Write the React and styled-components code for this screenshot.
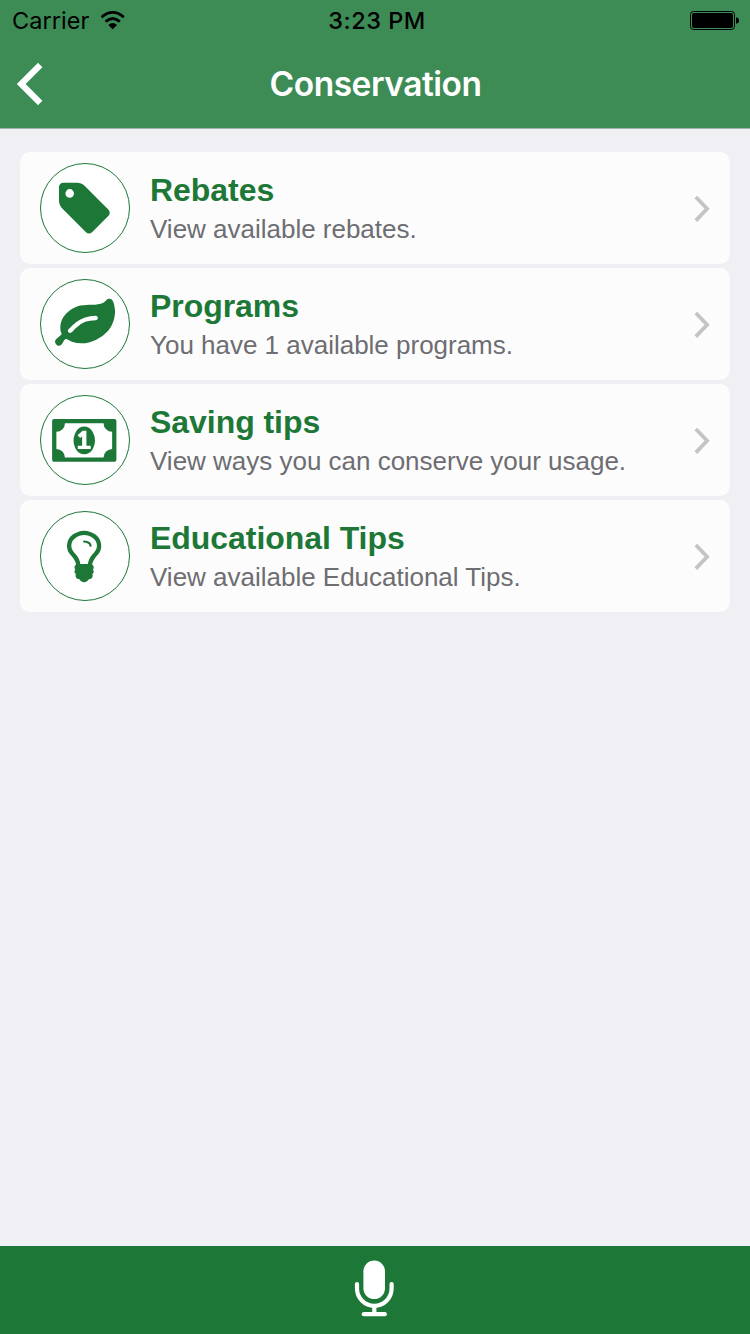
import styled, { createGlobalStyle } from "styled-components";

const GlobalStyle = createGlobalStyle`
  * {
    box-sizing: border-box;
  }
  body {
    margin: 0;
    background: #efeff4;
    font-family: "Liberation Sans", Arial, sans-serif;
  }
`;

const Screen = styled.div`
  display: flex;
  flex-direction: column;
  width: 750px;
  height: 1334px;
  overflow: hidden;
  background: #efeff4;
`;

const Header = styled.header`
  flex: none;
  height: 129px;
  background: #3d8b55;
  border-bottom: 1px solid #a3b3ab;
  font-family: Inter, sans-serif;
`;

const StatusBar = styled.div`
  display: grid;
  grid-template-columns: 1fr auto 1fr;
  align-items: center;
  height: 40px;
  padding: 0 11px 0 12px;
  color: #000;
  font-size: 24px;
  line-height: 40px;
`;

const Carrier = styled.div`
  display: flex;
  align-items: center;
  gap: 11px;
  font-size: 23.5px;
  padding-top: 1px;
  letter-spacing: 0.05px;
`;

const Clock = styled.time`
  font-weight: 500;
  font-size: 23.5px;
  letter-spacing: 0.5px;
  padding: 1px 0 0 3px;
`;

const Battery = styled.svg`
  justify-self: end;
  margin-bottom: 1px;
`;

const NavBar = styled.nav`
  display: grid;
  grid-template-columns: 60px 1fr 60px;
  align-items: center;
  height: 88px;
`;

const BackButton = styled.button`
  display: flex;
  padding: 0;
  border: 0;
  background: none;
`;

const Title = styled.h1`
  margin: 0;
  padding-left: 1px;
  color: #fff;
  font-size: 33.5px;
  font-weight: 600;
  line-height: 88px;
  letter-spacing: -0.48px;
  text-align: center;
`;

const Menu = styled.ul`
  flex: 1;
  display: flex;
  flex-direction: column;
  gap: 4px;
  margin: 0;
  padding: 23px 20px 0;
  list-style: none;
`;

const MenuItem = styled.li`
  display: flex;
  align-items: center;
  height: 112px;
  padding: 0 19px 0 20px;
  border-radius: 10px;
  background: #fcfcfc;
`;

const IconCircle = styled.div`
  flex: none;
  width: 90px;
  height: 90px;
  border: 1px solid #1d7838;
  border-radius: 50%;
  background: #fff;
  color: #1d7838;
  svg {
    display: block;
    margin: -1px;
  }
`;

const Texts = styled.div`
  flex: 1;
  padding: 2px 0 0 20px;
`;

const Name = styled.h2`
  margin: 0;
  color: #1d7838;
  font-size: 32px;
  line-height: 38px;
  letter-spacing: -0.05px;
`;

const Description = styled.p`
  margin: 0;
  padding-top: 2px;
  color: #6d6d72;
  font-size: 26px;
  line-height: 36px;
  letter-spacing: -0.01px;
`;

const Footer = styled.footer`
  flex: none;
  display: flex;
  justify-content: center;
  height: 88px;
  background: #1d7838;
`;

const items = [
  {
    name: "Rebates",
    description: "View available rebates.",
    x: 14.7,
    y: 15.4,
    path: "M576 448q0-53-37.5-90.5t-90.5-37.5-90.5 37.5-37.5 90.5 37.5 90.5 90.5 37.5 90.5-37.5 37.5-90.5zm1067 576q0 53-37 90l-491 492q-39 37-91 37-53 0-90-37l-715-716q-38-37-64.5-101t-26.5-117v-416q0-52 38-90t90-38h416q53 0 117 26.5t102 64.5l715 714q37 39 37 91z",
  },
  {
    name: "Programs",
    description: "You have 1 available programs.",
    x: 15,
    y: 15.4,
    path: "M1280 704q0-26-19-45t-45-19q-172 0-318 49.5t-259.5 134-235.5 219.5q-19 21-19 45 0 26 19 45t45 19q24 0 45-19 27-24 74-71t67-66q137-124 268.5-176t313.5-52q26 0 45-19t19-45zm512-198q0 95-20 193-46 224-184.5 383t-357.5 268q-214 108-438 108-148 0-286-47-15-5-88-42t-96-37q-16 0-39.5 32t-45 70-52.5 70-60 32q-43 0-63.5-17.5t-45.5-59.5q-2-4-6-11t-5.5-10-3-9.5-1.5-13.5q0-35 31-73.5t68-65.5 68-56 31-48q0-4-14-38t-16-44q-9-51-9-104 0-115 43.5-220t119-184.5 170.5-139 204-95.5q55-18 145-25.5t179.5-9 178.5-6 163.5-24 113.5-56.5l29.5-29.5 29.5-28 27-20 36.5-16 43.5-4.5q39 0 70.5 46t47.5 112 24 124 8 96z",
  },
  {
    name: "Saving tips",
    description: "View ways you can conserve your usage.",
    x: 12.1,
    y: 15.4,
    path: "M768 1152h384v-96h-128v-448h-114l-148 137 77 80q42-37 55-57h2v288h-128v96zm512-256q0 70-21 142t-59.5 134-101.5 101-138 39-138-39-101.5-101-59.5-134-21-142 21-142 59.5-134 101.5-101 138-39 138 39 101.5 101 59.5 134 21 142zm512 256v-512q-106 0-181-75t-75-181h-1152q0 106-75 181t-181 75v512q106 0 181 75t75 181h1152q0-106 75-181t181-75zm128-832v1152q0 26-19 45t-45 19h-1792q-26 0-45-19t-19-45v-1152q0-26 19-45t45-19h1792q26 0 45 19t19 45z",
  },
  {
    name: "Educational Tips",
    description: "View available Educational Tips.",
    x: 14.1,
    y: 15.5,
    path: "M1120 576q0 13-9.5 22.5t-22.5 9.5-22.5-9.5-9.5-22.5q0-46-54-71t-106-25q-13 0-22.5-9.5t-9.5-22.5 9.5-22.5 22.5-9.5q50 0 99.5 16t87 54 37.5 90zm160 0q0-72-34.5-134t-90-101.5-123-62-136.5-22.5-136.5 22.5-123 62-90 101.5-34.5 134q0 101 68 180 10 11 30.5 33t30.5 33q128 153 141 298h228q13-145 141-298 10-11 30.5-33t30.5-33q68-79 68-180zm128 0q0 155-103 268-45 49-74.5 87t-59.5 95.5-34 107.5q47 28 47 82 0 37-25 64 25 27 25 64 0 52-45 81 13 23 13 47 0 46-31.5 71t-77.5 25q-20 44-60 70t-87 26-87-26-60-70q-46 0-77.5-25t-31.5-71q0-24 13-47-45-29-45-81 0-37 25-64-25-27-25-64 0-54 47-82-4-50-34-107.5t-59.5-95.5-74.5-87q-103-113-103-268 0-99 44.5-184.5t117-142 164-89 186.5-32.5 186.5 32.5 164 89 117 142 44.5 184.5z",
  },
];

function WifiIcon() {
  return (
    <svg width="26" height="20" viewBox="0 0 26 20">
      <path d="M12.7 18.3 8.3 13.9Q12.7 10.2 17.1 13.9Z" />
      <g fill="none" stroke="#000" strokeWidth="2.8">
        <path d="M1.6 6.2Q12.7-3.4 23.8 6.2" />
        <path d="M5.6 10.6Q12.7 4.4 19.8 10.6" />
      </g>
    </svg>
  );
}

function App() {
  return (
    <Screen>
      <GlobalStyle />
      <Header>
        <StatusBar>
          <Carrier>
            Carrier
            <WifiIcon />
          </Carrier>
          <Clock>3:23 PM</Clock>
          <Battery width="49" height="20" viewBox="0 0 49 20">
            <rect x="0.5" y="1.5" width="44" height="18" rx="3" fill="none" stroke="#000" />
            <rect x="2" y="3" width="41" height="15" rx="2" />
            <path d="M46 7.2q3 .6 3 3.3t-3 3.3z" />
          </Battery>
        </StatusBar>
        <NavBar>
          <BackButton aria-label="Back">
            <svg width="60" height="88" viewBox="0 40 60 88">
              <path d="M40.2 65 21.2 84 40.2 103" fill="none" stroke="#fff" strokeWidth="6.2" />
            </svg>
          </BackButton>
          <Title>Conservation</Title>
        </NavBar>
      </Header>
      <Menu>
        {items.map(({ name, description, x, y, path }) => (
          <MenuItem key={name}>
            <IconCircle>
              <svg width="90" height="90" viewBox="0 0 90 90" fill="currentColor">
                <path transform={`translate(${x} ${y}) scale(0.0335)`} d={path} />
              </svg>
            </IconCircle>
            <Texts>
              <Name>{name}</Name>
              <Description>{description}</Description>
            </Texts>
            <svg width="18" height="30" viewBox="0 0 18 30">
              <path d="M2.8 4 14.1 15.8 2.8 27.6" fill="none" stroke="#c4c4c6" strokeWidth="3.8" />
            </svg>
          </MenuItem>
        ))}
      </Menu>
      <Footer>
        <svg width="90" height="88" viewBox="330 1246 90 88">
          <rect x="363.4" y="1260.5" width="21.6" height="38.6" rx="10.8" fill="#fff" />
          <g fill="none" stroke="#fff" strokeWidth="4.2" strokeLinecap="round">
            <path d="M357 1284v4.5a17.3 17.3 0 0 0 34.6 0V1284" />
            <path d="M374.3 1306v7" />
            <path d="M363.8 1314.2h21" />
          </g>
        </svg>
      </Footer>
    </Screen>
  );
}

export default App;
